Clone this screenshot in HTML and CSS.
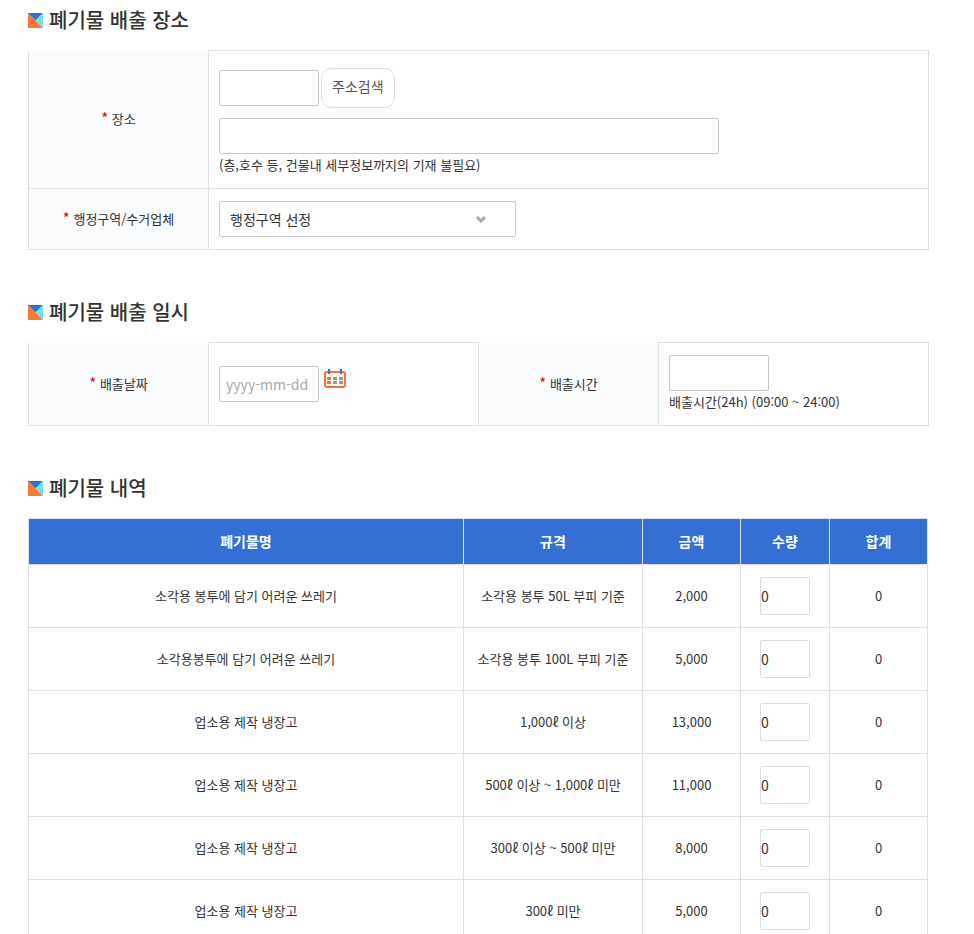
FILE: index.html
```html
<!DOCTYPE html>
<html lang="ko">
<head>
    <meta charset="UTF-8">
    <meta name="viewport" content="width=device-width, initial-scale=1.0">
    <title>폐기물 배출 신청</title>
    <link rel="stylesheet" href="styles.css">
</head>
<body>
    <form class="container">
        <section class="section">
            <h2>
                <svg class="bullet" viewBox="0 0 15 15" aria-hidden="true"><path fill="#f73" d="M0 0l15 15H0z"/><path fill="#366fc9" d="M0 0h15L7.5 7.5z"/><path fill="#69e4e9" d="M15 0v15L7.5 7.5z"/></svg>
                폐기물 배출 장소
            </h2>
            <table class="form-table">
                <colgroup>
                    <col class="col-label">
                    <col>
                </colgroup>
                <tr>
                    <th scope="row"><span class="required">*</span> <label for="zipcode">장소</label></th>
                    <td>
                        <div class="address-search">
                            <input type="text" id="zipcode" class="input-short">
                            <button type="button" class="button">주소검색</button>
                        </div>
                        <input type="text" id="address" class="input-long" aria-label="주소">
                        <p class="note">(층,호수 등, 건물내 세부정보까지의 기재 불필요)</p>
                    </td>
                </tr>
                <tr>
                    <th scope="row"><span class="required">*</span> <label for="area">행정구역/수거업체</label></th>
                    <td>
                        <select id="area">
                            <option>행정구역 선정</option>
                        </select>
                    </td>
                </tr>
            </table>
        </section>

        <section class="section">
            <h2>
                <svg class="bullet" viewBox="0 0 15 15" aria-hidden="true"><path fill="#f73" d="M0 0l15 15H0z"/><path fill="#366fc9" d="M0 0h15L7.5 7.5z"/><path fill="#69e4e9" d="M15 0v15L7.5 7.5z"/></svg>
                폐기물 배출 일시
            </h2>
            <table class="form-table">
                <colgroup>
                    <col class="col-label">
                    <col>
                    <col class="col-label">
                    <col>
                </colgroup>
                <tr>
                    <th scope="row"><span class="required">*</span> <label for="date">배출날짜</label></th>
                    <td>
                        <div class="date-field">
                            <input type="text" id="date" class="input-short" placeholder="yyyy-mm-dd">
                            <button type="button" class="calendar-button" aria-label="날짜 선택">
                                <svg viewBox="0 0 22 20" width="22" height="20"><rect x="1" y="3" width="20" height="15" rx="2" fill="#fff" stroke="#f76f36" stroke-width="2"/><path fill="#366fd4" d="M4 0h2v5H4zM16 0h2v5h-2z"/><path fill="#f76f36" d="M3 8h4v3H3zM3 12h4v3H3z"/><path fill="#999" d="M9 8h4v3H9zM15 8h4v3h-4zM9 12h4v3H9zM15 12h4v3h-4z"/></svg>
                            </button>
                        </div>
                    </td>
                    <th scope="row"><span class="required">*</span> <label for="time">배출시간</label></th>
                    <td>
                        <input type="text" id="time" class="input-short">
                        <p class="note">배출시간(24h) (09:00 ~ 24:00)</p>
                    </td>
                </tr>
            </table>
        </section>

        <section class="section list-section">
            <h2>
                <svg class="bullet" viewBox="0 0 15 15" aria-hidden="true"><path fill="#f73" d="M0 0l15 15H0z"/><path fill="#366fc9" d="M0 0h15L7.5 7.5z"/><path fill="#69e4e9" d="M15 0v15L7.5 7.5z"/></svg>
                폐기물 내역
            </h2>
            <table class="list-table">
                <colgroup>
                    <col>
                    <col class="col-size">
                    <col class="col-price">
                    <col class="col-count">
                    <col class="col-price">
                </colgroup>
                <thead>
                    <tr>
                        <th scope="col">폐기물명</th>
                        <th scope="col">규격</th>
                        <th scope="col">금액</th>
                        <th scope="col">수량</th>
                        <th scope="col">합계</th>
                    </tr>
                </thead>
                <tbody>
                    <tr>
                        <td>소각용 봉투에 담기 어려운 쓰레기</td>
                        <td>소각용 봉투 50L 부피 기준</td>
                        <td>2,000</td>
                        <td><input type="text" class="count" value="0" aria-label="수량"></td>
                        <td>0</td>
                    </tr>
                    <tr>
                        <td>소각용봉투에 담기 어려운 쓰레기</td>
                        <td>소각용 봉투 100L 부피 기준</td>
                        <td>5,000</td>
                        <td><input type="text" class="count" value="0" aria-label="수량"></td>
                        <td>0</td>
                    </tr>
                    <tr>
                        <td>업소용 제작 냉장고</td>
                        <td>1,000ℓ 이상</td>
                        <td>13,000</td>
                        <td><input type="text" class="count" value="0" aria-label="수량"></td>
                        <td>0</td>
                    </tr>
                    <tr>
                        <td>업소용 제작 냉장고</td>
                        <td>500ℓ 이상 ~ 1,000ℓ 미만</td>
                        <td>11,000</td>
                        <td><input type="text" class="count" value="0" aria-label="수량"></td>
                        <td>0</td>
                    </tr>
                    <tr>
                        <td>업소용 제작 냉장고</td>
                        <td>300ℓ 이상 ~ 500ℓ 미만</td>
                        <td>8,000</td>
                        <td><input type="text" class="count" value="0" aria-label="수량"></td>
                        <td>0</td>
                    </tr>
                    <tr>
                        <td>업소용 제작 냉장고</td>
                        <td>300ℓ 미만</td>
                        <td>5,000</td>
                        <td><input type="text" class="count" value="0" aria-label="수량"></td>
                        <td>0</td>
                    </tr>
                </tbody>
            </table>
        </section>
    </form>
</body>
</html>
```

FILE: styles.css
```css
* {
    box-sizing: border-box;
}

body {
    margin: 0;
    font-family: "Noto Sans CJK KR", "Noto Sans KR", sans-serif;
    font-size: 13px;
    line-height: 22px;
    color: #333;
    background-color: #fff;
}

.container {
    padding: 5px 45px 0 28px;
}

.section {
    margin-bottom: 47px;
}

.list-section {
    margin-bottom: 0;
    padding-right: 1px;
}

h2 {
    display: flex;
    align-items: center;
    gap: 6px;
    margin: 0 0 15px;
    font-size: 20px;
    font-weight: 500;
    line-height: 30px;
}

.bullet {
    width: 15px;
    height: 15px;
}

table {
    width: 100%;
    table-layout: fixed;
    border-collapse: collapse;
}

/* Form tables */
.form-table th,
.form-table td {
    padding: 12px 10px;
    border: 1px solid #e0e0e2;
}

.form-table th {
    background-color: #fafbfd;
    font-weight: 400;
    text-align: center;
}

.form-table tr:first-child th {
    border-top: none;
}

.col-label {
    width: 180px;
}

.required {
    color: #e60012;
    font-size: 15px;
    line-height: 1;
}

input,
select,
button {
    font-family: inherit;
    font-size: 14px;
    color: #333;
}

input,
select {
    display: block;
    height: 36px;
    padding: 0 6px;
    border: 1px solid #c8c8c8;
    border-radius: 2px;
    background-color: #fff;
}

input::placeholder {
    color: #aaa;
}

select {
    appearance: none;
    width: 297px;
    max-width: 100%;
    padding: 0 10px;
    background-image: url("data:image/svg+xml,%3Csvg xmlns='http://www.w3.org/2000/svg' width='10' height='7'%3E%3Cpath d='M1 1l4 4 4-4' fill='none' stroke='%23aaa' stroke-width='3'/%3E%3C/svg%3E");
    background-repeat: no-repeat;
    background-position: right 29px center;
}

.input-short {
    width: 100px;
}

.input-long {
    width: 500px;
    max-width: 100%;
}

.address-search {
    display: flex;
    align-items: center;
    gap: 2px;
    margin: 5px 0 10px;
}

.button {
    height: 40px;
    padding: 0 10px 4px;
    border: 1px solid #ddd;
    border-radius: 10px;
    background-color: #fff;
    color: #555;
    cursor: pointer;
}

.note {
    margin: 0;
}

.date-field {
    display: flex;
    align-items: flex-start;
    gap: 5px;
}

.calendar-button {
    padding: 3px 0;
    border: none;
    background: none;
    line-height: 0;
    cursor: pointer;
}

/* Waste list */
.list-table th,
.list-table td {
    padding: 12px 0;
    border: 1px solid #e0e0e2;
    text-align: center;
}

.list-table th {
    background-color: #366fd4;
    color: #fff;
    font-size: 14px;
    font-weight: 700;
    line-height: 21px;
}

.col-size {
    width: 179px;
}

.col-price {
    width: 98px;
}

.col-count {
    width: 89px;
}

.count {
    width: 50px;
    height: 38px;
    margin: 0 auto;
    padding: 0;
    border-color: #ddd;
}
```
